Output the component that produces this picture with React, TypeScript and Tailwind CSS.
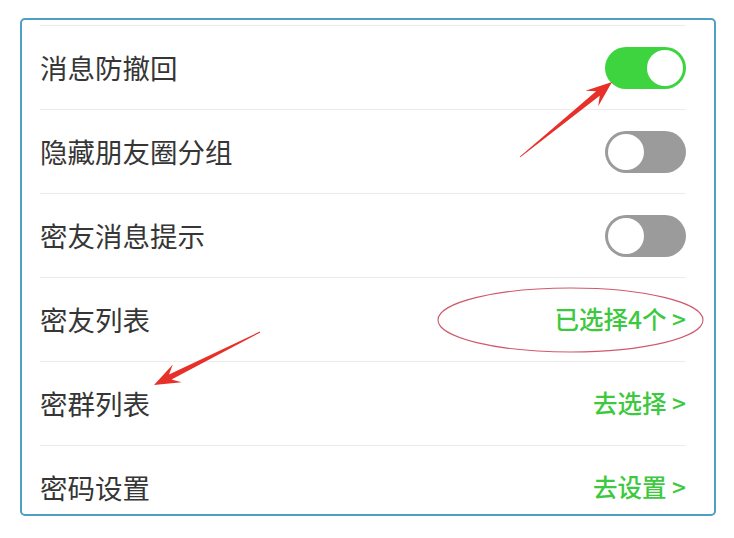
import React from "react";

type Row = { label: string; toggle?: boolean; on?: boolean; value?: string };

const rows: Row[] = [
  { label: "消息防撤回", toggle: true, on: true },
  { label: "隐藏朋友圈分组", toggle: true, on: false },
  { label: "密友消息提示", toggle: true, on: false },
  { label: "密友列表", value: "已选择4个" },
  { label: "密群列表", value: "去选择" },
  { label: "密码设置", value: "去设置" },
];

function Toggle({ on }: { on: boolean }) {
  return (
    <div
      className={
        "w-[81px] h-[42px] rounded-full p-[3px] flex " +
        (on ? "bg-[#3dd43f] justify-end" : "bg-[#9b9b9b] justify-start")
      }
    >
      <div className="w-[36px] h-[36px] rounded-full bg-white" />
    </div>
  );
}

function arrowPoints(tx: number, ty: number, hx: number, hy: number) {
  const dx = hx - tx;
  const dy = hy - ty;
  const L = Math.hypot(dx, dy);
  const ux = dx / L;
  const uy = dy / L;
  const nx = -uy;
  const ny = ux;
  const h = 26;
  const w = 10;
  const bx = hx - ux * h;
  const by = hy - uy * h;
  const jx = hx - ux * (h * 0.7);
  const jy = hy - uy * (h * 0.7);
  const pts: [number, number][] = [
    [tx + nx * 0.4, ty + ny * 0.4],
    [jx + nx * 2.8, jy + ny * 2.8],
    [bx + nx * w, by + ny * w],
    [hx, hy],
    [bx - nx * w, by - ny * w],
    [jx - nx * 2.8, jy - ny * 2.8],
    [tx - nx * 0.4, ty - ny * 0.4],
  ];
  return pts.map((p) => p[0].toFixed(1) + "," + p[1].toFixed(1)).join(" ");
}

export default function App() {
  return (
    <div
      className="relative w-[734px] h-[538px] bg-white overflow-hidden"
      style={{ fontFamily: '"Noto Sans CJK SC", "Noto Sans", sans-serif' }}
    >
      <div className="pt-[18px] pl-[20px]">
        <div className="w-[696px] h-[498px] border-2 border-[#4f9fc2] rounded-[5px] overflow-hidden pl-[18px] pr-[28px] pt-[5px]">
          <div className="border-t border-[#ececec]">
            {rows.map((r, i) => (
              <div
                key={i}
                className="h-[84px] flex items-center justify-between border-b border-[#ececec]"
              >
                <span className="text-[27.5px] leading-none text-[#363636]">{r.label}</span>
                {r.toggle ? (
                  <Toggle on={!!r.on} />
                ) : (
                  <span className="text-[24.5px] leading-none font-medium text-[#3cc93e]">
                    {r.value} &gt;
                  </span>
                )}
              </div>
            ))}
          </div>
        </div>
      </div>
      <svg
        className="absolute left-0 top-0 pointer-events-none"
        width={734}
        height={538}
        viewBox="0 0 734 538"
      >
        <ellipse cx={570.5} cy={320} rx={132.5} ry={32} fill="none" stroke="#cf5a6c" strokeWidth={1.1} />
        <polygon points={arrowPoints(520, 157, 612, 82)} fill="#e8302a" />
        <polygon points={arrowPoints(260, 332, 154, 385)} fill="#e8302a" />
      </svg>
    </div>
  );
}
